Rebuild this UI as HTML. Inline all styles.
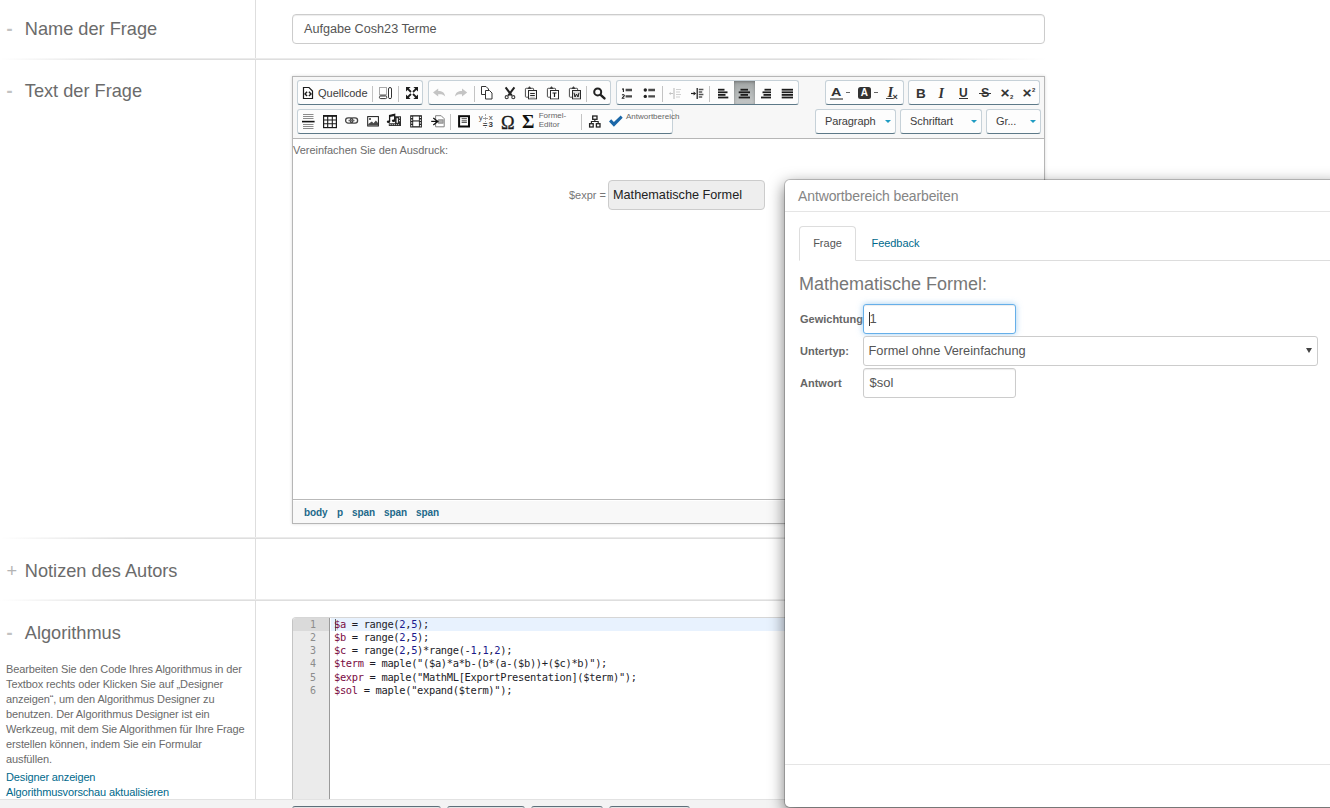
<!DOCTYPE html>
<html lang="de">
<head>
<meta charset="utf-8">
<title>Frage bearbeiten</title>
<style>
*{box-sizing:border-box;}
html,body{margin:0;padding:0;}
body{width:1330px;height:808px;overflow:hidden;background:#fff;font-family:"Liberation Sans",Arial,sans-serif;color:#666;position:relative;font-size:12px;}
.abs{position:absolute;}
.vline{position:absolute;left:255px;top:0;width:1px;height:799px;background:#dedede;}
.hline{position:absolute;left:0;width:1046px;height:2px;background:linear-gradient(to right,rgba(255,255,255,1) 0,rgba(255,255,255,0) 130px,rgba(255,255,255,0) 880px,rgba(255,255,255,1) 1046px),linear-gradient(#ebebeb 50%,#dedede 50%);}
.sec{position:absolute;left:6.500px;font-size:18.200px;color:#6b6b6b;white-space:nowrap;}
.sec .tg{display:inline-block;width:18.300px;color:#b4b4b4;}
.inp{position:absolute;left:292px;top:14px;width:753px;height:30px;border:1px solid #ccc;border-radius:4px;background:#fff;box-shadow:inset 0 1px 1px rgba(0,0,0,.075);font-size:12.650px;color:#555;line-height:28px;padding-left:11px;}
/* editor */
.cke{position:absolute;left:292px;top:76px;width:753px;height:448px;border:1px solid #b6b6b6;background:#fff;box-shadow:0 0 3px rgba(0,0,0,.15);}
.cke-top{position:absolute;left:0;top:0;width:751px;height:62px;background:#f7f7f7;border-bottom:1px solid #b6b6b6;}
.cke-bot{position:absolute;left:0;bottom:0;width:751px;height:24px;background:#f8f8f8;border-top:1px solid #b9b9b9;box-shadow:inset 0 1px 0 #fff;}
.cke-bot span{position:absolute;top:6.500px;letter-spacing:-0.080px;font-size:10px;font-weight:bold;color:#21688a;}
.grp{position:absolute;border:1px solid #c6d1d8;border-bottom:1px solid #5d7988;border-radius:3px;background:#fdfdfd;}
.combo{position:absolute;height:25px;border:1px solid #c6d1d8;border-bottom:1px solid #5d7988;border-radius:3px;background:#fdfdfd;font-size:11px;color:#3c3c3c;line-height:23px;padding-left:9px;letter-spacing:-0.100px;}
.combo i{position:absolute;right:4.500px;top:10px;border:3.5px solid transparent;border-top:3.5px solid #1f9bc2;border-bottom:0;width:0;height:0;}
.sep{position:absolute;width:1px;height:16px;background:#c3c3c3;}
.ico{position:absolute;}
/* ace */
.ace{position:absolute;left:292px;top:617px;width:500px;height:182px;background:#fff;border-top:1px solid #d6d6d6;border-left:1px solid #c4c4c4;border-radius:4px 0 0 0;overflow:hidden;}
.gut{position:absolute;left:0;top:0;width:37px;height:182px;background:#ebebeb;border-right:1px solid #9a9a9a;}
.gut b{position:absolute;left:0;top:0;width:36px;height:13px;background:#dadada;}
.gut span{position:absolute;right:13px;font:10px/13px "DejaVu Sans Mono","Liberation Mono",monospace;color:#8c8c8c;font-weight:normal;}
.code{position:absolute;left:41px;font:10.400px/13px "DejaVu Sans Mono","Liberation Mono",monospace;color:#1c1c28;white-space:pre;letter-spacing:-0.320px;}
.code .v{color:#7a0a42;}
.code .n{color:#1a1a8c;}
.actl{position:absolute;left:38px;top:0;width:462px;height:13px;background:#e8f2fe;}
/* help */
.help{position:absolute;left:6px;top:662.400px;width:252px;font-size:11px;line-height:14.930px;color:#6a6a6a;letter-spacing:-0.120px;white-space:nowrap;}
.lnk{position:absolute;left:6px;font-size:11px;color:#00698c;white-space:nowrap;letter-spacing:-0.140px;}
/* bottom bar */
.bbar{position:absolute;left:0;top:799px;width:1330px;height:9px;background:#f3f3f3;border-top:1px solid #e2e2e2;}
.bbtn{position:absolute;top:806px;height:8px;border:1px solid #8a9aa3;border-top:1.500px solid #5d6f7a;border-radius:3px;background:#e4e4e4;}
/* modal */
.modal{position:absolute;left:784px;top:179px;width:560px;height:629px;background:#fff;background-clip:padding-box;border:1px solid rgba(0,0,0,.2);border-radius:6px;box-shadow:0 5px 15px rgba(0,0,0,.5);}
.mh{position:absolute;left:0;top:0;width:100%;height:32px;border-bottom:1px solid #e5e5e5;font-size:14px;color:#858585;padding:7.500px 0 0 13px;letter-spacing:-0.12px;white-space:nowrap;}
.mf{position:absolute;left:0;top:584px;width:100%;height:1px;background:#e5e5e5;}
.tabs{position:absolute;left:14px;top:46px;width:546px;height:35px;border-bottom:1px solid #ddd;}
.tab1{position:absolute;left:0;top:0;width:57px;height:35px;border:1px solid #ddd;border-bottom:1px solid #fff;border-radius:4px 4px 0 0;background:#fff;font-size:11px;color:#555;text-align:center;line-height:33px;}
.tab2{position:absolute;left:72.500px;top:0;height:34px;font-size:11px;letter-spacing:-0.05px;color:#00698c;line-height:35px;}
.mt{position:absolute;left:14px;top:94px;font-size:18px;color:#777;white-space:nowrap;}
.lab{position:absolute;left:15px;font-size:11px;font-weight:bold;color:#666;white-space:nowrap;}
.fi{position:absolute;left:78px;width:153px;height:30px;border:1px solid #ccc;border-radius:3px;background:#fff;font-size:13px;color:#555;line-height:28px;padding-left:5.500px;box-shadow:inset 0 1px 1px rgba(0,0,0,.075);}
.fi.foc{border-color:#66afe9;box-shadow:inset 0 1px 1px rgba(0,0,0,.075),0 0 6px rgba(102,175,233,.6);}
.sel{position:absolute;left:78px;top:156px;width:455px;height:30px;border:1px solid #ccc;border-radius:3px;background:#fff;font-size:12.800px;color:#555;line-height:28px;padding-left:4.500px;}
</style>
</head>
<body>
<div class="vline"></div>
<div class="hline" style="top:58px"></div>
<div class="hline" style="top:537px"></div>
<div class="hline" style="top:599px"></div>

<div class="sec" style="top:19.300px"><span class="tg" style="font-weight:bold;color:#c2c2c2">-</span>Name der Frage</div>
<div class="sec" style="top:81.300px"><span class="tg" style="font-weight:bold;color:#c2c2c2">-</span>Text der Frage</div>
<div class="sec" style="top:561.300px"><span class="tg">+</span>Notizen des Autors</div>
<div class="sec" style="top:623.300px"><span class="tg" style="font-weight:bold;color:#c2c2c2">-</span>Algorithmus</div>

<div class="inp">Aufgabe Cosh23 Terme</div>

<div class="cke">
  <div class="cke-top" id="tb"></div>
  <div class="abs" style="left:0;top:67px;font-size:11px;color:#6c6c6c;white-space:nowrap;letter-spacing:-0.03px">Vereinfachen Sie den Ausdruck:</div>
  <div class="abs" style="left:276px;top:112px;font-size:11px;color:#777;white-space:nowrap">$expr =</div>
  <div class="abs" style="left:315px;top:103px;width:157px;height:30px;border:1px solid #ccc;border-radius:4px;background:#eee;font-size:12.700px;color:#222;line-height:28px;padding-left:4px;white-space:nowrap">Mathematische Formel</div>
  <div class="cke-bot">
    <span style="left:11px">body</span><span style="left:44px">p</span><span style="left:59px">span</span><span style="left:91px">span</span><span style="left:123px">span</span>
  </div>
</div>

<div id="tbar" class="abs" style="left:0;top:0"><!--TB--><div class="grp" style="left:297px;top:80px;width:126px;height:25px"></div>
<div class="grp" style="left:428px;top:80px;width:183px;height:25px"></div>
<div class="grp" style="left:616px;top:80px;width:183px;height:25px"></div>
<div class="grp" style="left:825px;top:80px;width:79px;height:25px"></div>
<div class="grp" style="left:908px;top:80px;width:132px;height:25px"></div>
<div class="grp" style="left:297px;top:109px;width:376px;height:25px"></div>
<div class="sep" style="left:372px;top:86px"></div>
<div class="sep" style="left:398px;top:86px"></div>
<div class="sep" style="left:474px;top:86px"></div>
<div class="sep" style="left:586px;top:86px"></div>
<div class="sep" style="left:662px;top:86px"></div>
<div class="sep" style="left:709px;top:86px"></div>
<div class="sep" style="left:450px;top:114px"></div>
<div class="sep" style="left:581px;top:114px"></div>
<svg class="ico" style="left:300px;top:85px" width="16" height="16" viewBox="0 0 16 16"><path d="M3.500 2.500h5.500l3.500 3.500v7.500h-9z" fill="#fff" stroke="#1c1c1c" stroke-width="1.200"/><path d="M7.100 6.800L5 8.900 7.100 11M8.900 6.800L11 8.900 8.900 11" fill="none" stroke="#1c1c1c" stroke-width="1.400"/></svg>
<div class="abs" style="left:318px;top:87px;white-space:nowrap;font-size:11px;line-height:13px;color:#3c3c3c;">Quellcode</div>
<svg class="ico" style="left:377px;top:85px" width="16" height="16" viewBox="0 0 16 16"><rect x="2.500" y="2.500" width="7" height="7" fill="none" stroke="#555" stroke-width="1" stroke-dasharray="1 1"/><path d="M2.500 10.500h7" stroke="#aaa" stroke-width="1"/><rect x="2.400" y="11" width="7.400" height="2.600" rx="1.300" fill="#fff" stroke="#333" stroke-width="1"/><rect x="11.500" y="2.500" width="3" height="11.200" rx="1.500" fill="#fff" stroke="#333" stroke-width="1"/></svg>
<svg class="ico" style="left:404px;top:85px" width="16" height="16" viewBox="0 0 16 16"><g fill="#1c1c1c" stroke="none"><path d="M2 2h4.600L2 6.600z"/><path d="M14 2v4.600L9.400 2z"/><path d="M2 14V9.400L6.600 14z"/><path d="M14 14H9.400L14 9.400z"/></g><path d="M3.600 3.600L7 7M12.400 3.600L9 7M3.600 12.400L7 9M12.400 12.400L9 9" stroke="#1c1c1c" stroke-width="1.800" fill="none"/></svg>
<svg class="ico" style="left:431px;top:85px" width="16" height="16" viewBox="0 0 16 16"><path d="M2 7.500L7.200 3.600v2.400c4 0 6.500 1.500 7 5.600C12.500 9.400 10.500 9 7.200 9.200V11.600z" fill="#c4c4c4"/></svg>
<svg class="ico" style="left:453px;top:85px" width="16" height="16" viewBox="0 0 16 16"><path d="M14.200 7.500L9 3.600v2.400c-4 0-6.500 1.500-7 5.600C3.700 9.400 5.700 9 9 9.200V11.600z" fill="#c4c4c4"/></svg>
<svg class="ico" style="left:479px;top:85px" width="16" height="16" viewBox="0 0 16 16"><path d="M2.500 1.500h4.500l2.500 2.500v5.500h-7z" fill="#fff" stroke="#333"/><path d="M6.500 5.500h4l2.500 2.500v6h-6.500z" fill="#fff" stroke="#333"/></svg>
<svg class="ico" style="left:502px;top:85px" width="16" height="16" viewBox="0 0 16 16"><path d="M3.600 2.300l6.200 8.400M12.400 2.300L6.200 10.700" stroke="#222" stroke-width="2" fill="none"/><circle cx="4.700" cy="12.200" r="1.500" fill="#fff" stroke="#444" stroke-width="1.200"/><circle cx="11.300" cy="12.200" r="1.500" fill="#fff" stroke="#444" stroke-width="1.200"/></svg>
<svg class="ico" style="left:523px;top:85px" width="16" height="16" viewBox="0 0 16 16"><path d="M4.500 3.300H3.200q-0.800 0-0.800 0.800V11.400q0 0.800 0.800 0.800H5.500" fill="none" stroke="#4a4a4a" stroke-width="1"/><path d="M8.500 3.300H9.800q0.800 0 0.800 0.800V5.500" fill="none" stroke="#4a4a4a" stroke-width="1"/><path d="M4.300 3.900c0-1 0.700-1.300 1.300-1.300 0-1.500 1.800-1.500 1.800 0 0.600 0 1.300 0.300 1.300 1.300z" fill="#3a3a3a"/><rect x="5.500" y="5.500" width="8" height="8.300" fill="#e6e6e6" stroke="#2a2a2a" stroke-width="1"/><rect x="6" y="6" width="7" height="7.300" fill="#f4f4f4"/><path d="M7.200 8.500h4.600M7.200 10.500h4.600" stroke="#2a2a2a" stroke-width="1"/><path d="M7.200 12.300h4.600" stroke="#999" stroke-width="0.600"/></svg>
<svg class="ico" style="left:545px;top:85px" width="16" height="16" viewBox="0 0 16 16"><path d="M4.500 3.300H3.200q-0.800 0-0.800 0.800V11.400q0 0.800 0.800 0.800H5.500" fill="none" stroke="#4a4a4a" stroke-width="1"/><path d="M8.500 3.300H9.800q0.800 0 0.800 0.800V5.500" fill="none" stroke="#4a4a4a" stroke-width="1"/><path d="M4.300 3.900c0-1 0.700-1.300 1.300-1.300 0-1.500 1.800-1.500 1.800 0 0.600 0 1.300 0.300 1.300 1.300z" fill="#3a3a3a"/><rect x="5.500" y="5.500" width="8" height="8.300" fill="#e6e6e6" stroke="#2a2a2a" stroke-width="1"/><rect x="6" y="6" width="7" height="7.300" fill="#fff"/><path d="M7.500 8h4M9.500 8v4" stroke="#1a1a1a" stroke-width="1.200" fill="none"/></svg>
<svg class="ico" style="left:567px;top:85px" width="16" height="16" viewBox="0 0 16 16"><path d="M4.500 3.300H3.200q-0.800 0-0.800 0.800V11.400q0 0.800 0.800 0.800H5.500" fill="none" stroke="#4a4a4a" stroke-width="1"/><path d="M8.500 3.300H9.800q0.800 0 0.800 0.800V5.500" fill="none" stroke="#4a4a4a" stroke-width="1"/><path d="M4.300 3.900c0-1 0.700-1.300 1.300-1.300 0-1.500 1.800-1.500 1.800 0 0.600 0 1.300 0.300 1.300 1.300z" fill="#3a3a3a"/><rect x="5.500" y="5.500" width="8" height="8.300" fill="#e6e6e6" stroke="#2a2a2a" stroke-width="1"/><rect x="6" y="6" width="7" height="7.300" fill="#e0e0e0"/><path d="M7 7.800l1 4.200 1.500-3 1.500 3 1-4.200" stroke="#1a1a1a" stroke-width="1" fill="none" stroke-linejoin="round"/></svg>
<svg class="ico" style="left:591px;top:85px" width="16" height="16" viewBox="0 0 16 16"><circle cx="6.700" cy="6.900" r="3.500" fill="none" stroke="#222" stroke-width="2"/><path d="M9.600 9.800l3.900 3.600" stroke="#222" stroke-width="2.400" stroke-linecap="round"/></svg>
<svg class="ico" style="left:620px;top:85px" width="16" height="16" viewBox="0 0 16 16"><path d="M5.600 5h6.400M5.600 11.400h6.400" stroke="#4a4a4a" stroke-width="2.400"/><path d="M3.400 3.500v3.500M2.300 4.500l1.100-1" stroke="#222" stroke-width="1.100" fill="none"/><path d="M2.200 10.300c0.500-1 2.300-0.800 2.100 0.400-0.200 0.900-2 1.500-2.100 2.500h2.300" stroke="#222" stroke-width="1.100" fill="none"/></svg>
<svg class="ico" style="left:642px;top:85px" width="16" height="16" viewBox="0 0 16 16"><path d="M6.300 5h6.700M6.300 11.400h6.700" stroke="#4a4a4a" stroke-width="2.400"/><circle cx="3.300" cy="5" r="1.700" fill="#222"/><circle cx="3.300" cy="11.400" r="1.700" fill="#222"/></svg>
<svg class="ico" style="left:667px;top:85px" width="16" height="16" viewBox="0 0 16 16"><g stroke="#d0d0d0" fill="none"><path d="M7 3v11" stroke-width="1.200" stroke="#c2c2c2"/><path d="M9 4.500h5M9 7h4M9 9.500h5M9 12h4" stroke-width="1.200"/><path d="M3 8.500h3" stroke-width="1" stroke="#c2c2c2"/></g><path d="M1.800 8.500l2-1.600v3.200z" fill="#c2c2c2"/></svg>
<svg class="ico" style="left:689px;top:85px" width="16" height="16" viewBox="0 0 16 16"><g stroke="#555" fill="none"><path d="M8.200 3v11" stroke-width="1.300" stroke="#222"/><path d="M9.800 4.500h4.600M9.800 7h3.400M9.800 9.500h4.600M9.800 12h3.400" stroke-width="1.300"/><path d="M2 8.500h3.500" stroke-width="1.200" stroke="#222"/></g><path d="M7.200 8.500l-2.600-2v4z" fill="#222"/></svg>
<svg class="ico" style="left:716px;top:85px" width="16" height="16" viewBox="0 0 16 16"><path d="M2 4.7H8.5" stroke="#1d1d1d" stroke-width="1.800"/><path d="M2 7.3H11.5" stroke="#1d1d1d" stroke-width="1.800"/><path d="M2 9.9H9.5" stroke="#1d1d1d" stroke-width="1.800"/><path d="M2 12.5H12.3" stroke="#1d1d1d" stroke-width="1.800"/></svg>
<div class="abs" style="left:734px;top:81px;width:21px;height:23px;background:linear-gradient(#9fa3a3,#b2b6b6 45%,#c3c6c6);box-shadow:inset 0 1px 3px rgba(0,0,0,.3)"></div>
<svg class="ico" style="left:736px;top:85px" width="16" height="16" viewBox="0 0 16 16"><path d="M4.5 4.7H12" stroke="#1d1d1d" stroke-width="1.800"/><path d="M2.7 7.3H14" stroke="#1d1d1d" stroke-width="1.800"/><path d="M4.5 9.9H12" stroke="#1d1d1d" stroke-width="1.800"/><path d="M2.7 12.5H14" stroke="#1d1d1d" stroke-width="1.800"/></svg>
<svg class="ico" style="left:758px;top:85px" width="16" height="16" viewBox="0 0 16 16"><path d="M6.5 4.7H13" stroke="#1d1d1d" stroke-width="1.800"/><path d="M4.5 7.3H13" stroke="#1d1d1d" stroke-width="1.800"/><path d="M5.5 9.9H13" stroke="#1d1d1d" stroke-width="1.800"/><path d="M3 12.5H13" stroke="#1d1d1d" stroke-width="1.800"/></svg>
<svg class="ico" style="left:779px;top:85px" width="16" height="16" viewBox="0 0 16 16"><path d="M2.7 4.7H14" stroke="#1d1d1d" stroke-width="1.800"/><path d="M2.7 7.3H14" stroke="#1d1d1d" stroke-width="1.800"/><path d="M2.7 9.9H14" stroke="#1d1d1d" stroke-width="1.800"/><path d="M2.7 12.5H14" stroke="#1d1d1d" stroke-width="1.800"/></svg>
<div class="abs" style="left:830.5px;top:86px;white-space:nowrap;font-size:11.500px;font-weight:bold;color:#333;line-height:13px;transform:scaleX(1.250);transform-origin:0 0">A</div>
<div class="abs" style="left:830px;top:98px;width:13px;height:2px;background:#8a8a8a"></div>
<div class="abs" style="left:846px;top:92px;width:4px;height:1px;background:#666"></div>
<div class="abs" style="left:858px;top:87px;width:13px;height:12px;background:#333;border-radius:2.500px"></div>
<div class="abs" style="left:860.7px;top:87px;white-space:nowrap;font-size:10px;font-weight:bold;color:#fff;line-height:12px">A</div>
<div class="abs" style="left:874px;top:92px;width:4px;height:1px;background:#666"></div>
<div class="abs" style="left:887.5px;top:84px;white-space:nowrap;font-size:14.500px;font-weight:bold;font-style:italic;color:#333;line-height:17px;font-family:'Liberation Serif',serif">I</div>
<div class="abs" style="left:886px;top:98px;width:7px;height:1px;background:#444"></div>
<div class="abs" style="left:892.5px;top:92px;white-space:nowrap;font-size:9px;font-weight:bold;color:#333;line-height:10px">×</div>
<div class="abs" style="left:916px;top:85.5px;white-space:nowrap;font-weight:bold;color:#333;font-size:13.500px;line-height:15px">B</div>
<div class="abs" style="left:938.5px;top:86px;white-space:nowrap;font-weight:bold;color:#333;font-size:14px;line-height:16px;font-style:italic;font-family:'Liberation Serif',serif">I</div>
<div class="abs" style="left:959px;top:86px;white-space:nowrap;font-weight:bold;color:#333;font-size:12px;line-height:15px">U</div>
<div class="abs" style="left:959px;top:98px;width:9px;height:1px;background:#333"></div>
<div class="abs" style="left:981px;top:86px;white-space:nowrap;font-weight:bold;color:#333;font-size:12.500px;line-height:15px">S</div>
<div class="abs" style="left:979px;top:92.5px;width:12px;height:1.200px;background:#333"></div>
<div class="abs" style="left:1000.5px;top:84.5px;white-space:nowrap;font-weight:bold;color:#333;font-size:15.500px;line-height:16px">×</div>
<div class="abs" style="left:1010px;top:94px;white-space:nowrap;font-weight:bold;color:#333;font-size:6px;line-height:6px">2</div>
<div class="abs" style="left:1022.5px;top:84.7px;white-space:nowrap;font-weight:bold;color:#333;font-size:15.500px;line-height:16px">×</div>
<div class="abs" style="left:1032px;top:87px;white-space:nowrap;font-weight:bold;color:#333;font-size:6px;line-height:6px">2</div>
<svg class="ico" style="left:300px;top:113px" width="16" height="17" viewBox="0 0 16 17"><path d="M3 1.500h10.500M3 3.500h10.500M3 5.500h10.500M3 11.500h10.500M3 13.500h10.500M3 15.500h10.500" stroke="#8c8c8c" stroke-width="1"/><path d="M2 8.600h12.600" stroke="#111" stroke-width="1.600"/></svg>
<svg class="ico" style="left:322px;top:113px" width="16" height="17" viewBox="0 0 16 17"><rect x="1.600" y="2.600" width="12.800" height="12" fill="#fff" stroke="#1a1a1a" stroke-width="1.200"/><path d="M1 2.900h14" stroke="#1a1a1a" stroke-width="1.800"/><path d="M1.500 7h13M1.500 10.800h13M5.700 3v11.500M10.300 3v11.500" stroke="#1a1a1a" stroke-width="1.100"/></svg>
<svg class="ico" style="left:344px;top:113px" width="16" height="17" viewBox="0 0 16 17"><rect x="1.600" y="4.900" width="7.200" height="5.200" rx="2.600" fill="none" stroke="#444" stroke-width="1.300"/><rect x="6.400" y="4.900" width="7.200" height="5.200" rx="2.600" fill="none" stroke="#444" stroke-width="1.300"/><path d="M4.500 7.500h6" stroke="#666" stroke-width="1.400"/></svg>
<svg class="ico" style="left:365px;top:113px" width="16" height="17" viewBox="0 0 16 17"><rect x="2.700" y="3.600" width="10.700" height="9.400" fill="#fff" stroke="#1a1a1a" stroke-width="1"/><path d="M3.200 12.500V11l1.800-1.200 1.900-1.400 1.600 1.900 2.400-2.700 2.100 2.400v2.500z" fill="#4a4a4a"/><circle cx="5" cy="6" r="1" fill="#333"/></svg>
<svg class="ico" style="left:386px;top:113px" width="16" height="17" viewBox="0 0 16 17"><path d="M9 3.300h6v9.600H2.800v-2.700H9z" fill="#2e2e2e"/><rect x="10.600" y="5.200" width="1.300" height="4.600" fill="#fff"/><rect x="13" y="4.300" width="1" height="1.300" fill="#ddd"/><rect x="13" y="7" width="1" height="1.300" fill="#ddd"/><path d="M3.600 11.600h9.500" stroke="#bbb" stroke-width="1" stroke-dasharray="1.200 0.900"/><path d="M3.600 8.600V2.600L8.700 1.400v6.300" fill="none" stroke="#1a1a1a" stroke-width="1.300"/><path d="M3.600 3.300L8.700 2.100" stroke="#1a1a1a" stroke-width="1.600"/><ellipse cx="2.500" cy="8.800" rx="1.700" ry="1.300" fill="#1a1a1a"/><ellipse cx="7.600" cy="7.800" rx="1.700" ry="1.300" fill="#1a1a1a"/></svg>
<svg class="ico" style="left:408px;top:113px" width="16" height="17" viewBox="0 0 16 17"><rect x="2.200" y="2.200" width="11.700" height="12.300" fill="#242424"/><rect x="5.200" y="3.500" width="5.700" height="3.900" fill="#fff"/><rect x="5.200" y="8.500" width="5.700" height="4.700" fill="#fff"/><rect x="3.1" y="3.7" width="1.200" height="1.300" fill="#fff"/><rect x="3.1" y="6.5" width="1.200" height="1.300" fill="#fff"/><rect x="3.1" y="9.3" width="1.200" height="1.300" fill="#fff"/><rect x="3.1" y="12.1" width="1.200" height="1.300" fill="#fff"/><rect x="11.8" y="3.7" width="1.200" height="1.300" fill="#fff"/><rect x="11.8" y="6.5" width="1.200" height="1.300" fill="#fff"/><rect x="11.8" y="9.3" width="1.200" height="1.300" fill="#fff"/><rect x="11.8" y="12.1" width="1.200" height="1.300" fill="#fff"/></svg>
<svg class="ico" style="left:430px;top:113px" width="16" height="17" viewBox="0 0 16 17"><path d="M5.600 2.700h5.600l3 3v8.100H5.600z" fill="#fff" stroke="#808080" stroke-width="1"/><rect x="8.300" y="6.800" width="4.800" height="3.400" fill="#b0b0b0" stroke="#808080" stroke-width="0.800"/><path d="M1.200 8.400h6.600" stroke="#111" stroke-width="1.200"/><path d="M3.300 4.900l4.600 3.500-4.600 3.500" fill="none" stroke="#111" stroke-width="1.200"/></svg>
<svg class="ico" style="left:456px;top:113px" width="16" height="17" viewBox="0 0 16 17"><rect x="3.100" y="3.200" width="9.900" height="10.300" fill="#fff" stroke="#0a0a0a" stroke-width="2"/><path d="M5.600 5.500h5.300M5.600 7.300h5.300" stroke="#666" stroke-width="1"/><path d="M5.600 9.200h5.300" stroke="#111" stroke-width="1"/></svg>
<div class="abs" style="left:485px;top:114px;width:0;height:14px;border-left:1px dotted #aaa"></div>
<div class="abs" style="left:483px;top:118px;width:5px;height:1px;background:#999"></div>
<div class="abs" style="left:478.8px;top:113.5px;white-space:nowrap;font-size:8px;line-height:8px;color:#484848">y</div>
<div class="abs" style="left:488.8px;top:113.5px;white-space:nowrap;font-size:8px;line-height:8px;color:#484848">x</div>
<div class="abs" style="left:482.8px;top:120.8px;white-space:nowrap;font-size:8px;line-height:8px;color:#3a3a3a;letter-spacing:1px;font-weight:bold">=3</div>
<div class="abs" style="left:501px;top:111.6px;white-space:nowrap;font-size:18.300px;line-height:22px;color:#1a1a1a;font-family:'Liberation Serif',serif;-webkit-text-stroke:0.350px #1a1a1a">Ω</div>
<div class="abs" style="left:522px;top:111.3px;white-space:nowrap;font-size:19px;line-height:21px;color:#111;font-weight:bold;font-family:'Liberation Serif',serif">Σ</div>
<div class="abs" style="left:538.7px;top:112.3px;white-space:nowrap;font-size:8px;line-height:8.800px;color:#666">Formel-<br>Editor</div>
<svg class="ico" style="left:587px;top:113px" width="16" height="17" viewBox="0 0 16 17"><g fill="#fff" stroke="#222" stroke-width="1.300"><rect x="5.700" y="3" width="4.300" height="3.300"/><rect x="2.600" y="10.700" width="3.600" height="3.300"/><rect x="9.400" y="10.700" width="3.600" height="3.300"/></g><path d="M7.850 6.500v2.200M4.400 10.500v-2h6.800v2" fill="none" stroke="#222" stroke-width="1.100"/></svg>
<svg class="ico" style="left:608px;top:113px" width="16" height="17" viewBox="0 0 16 17"><path d="M1 8.400l2.200-2.200 2.700 2.700L12.700 2.600l2 2.100L5.900 13.700z" fill="#1b67a8"/></svg>
<div class="abs" style="left:626px;top:111.5px;white-space:nowrap;font-size:8px;line-height:9px;color:#666">Antwortbereich</div>
<div class="combo" style="left:815px;top:109px;width:81px">Paragraph<i></i></div>
<div class="combo" style="left:900px;top:109px;width:82px">Schriftart<i></i></div>
<div class="combo" style="left:986px;top:109px;width:55px">Gr...<i></i></div><!--/TB--></div>
<div class="help">Bearbeiten Sie den Code Ihres Algorithmus in der<br>Textbox rechts oder Klicken Sie auf „Designer<br>anzeigen“, um den Algorithmus Designer zu<br>benutzen. Der Algorithmus Designer ist ein<br>Werkzeug, mit dem Sie Algorithmen für Ihre Frage<br>erstellen können, indem Sie ein Formular<br>ausfüllen.</div>
<div class="lnk" style="top:771px">Designer anzeigen</div>
<div class="lnk" style="top:786px">Algorithmusvorschau aktualisieren</div>

<div class="ace">
  <div class="actl"></div><div class="abs" style="left:42px;top:1px;width:1px;height:12px;background:#666"></div>
  <div class="gut"><b></b>
    <span style="top:0">1</span><span style="top:13.15px">2</span><span style="top:26.3px">3</span><span style="top:39.45px">4</span><span style="top:52.6px">5</span><span style="top:65.75px">6</span>
  </div>
  <div class="code" style="top:0"><span class="v">$a</span> = range(<span class="n">2</span>,<span class="n">5</span>);</div>
  <div class="code" style="top:13.15px"><span class="v">$b</span> = range(<span class="n">2</span>,<span class="n">5</span>);</div>
  <div class="code" style="top:26.3px"><span class="v">$c</span> = range(<span class="n">2</span>,<span class="n">5</span>)*range(-<span class="n">1</span>,<span class="n">1</span>,<span class="n">2</span>);</div>
  <div class="code" style="top:39.45px"><span class="v">$term</span> = maple("($a)*a*b-(b*(a-($b))+($c)*b)");</div>
  <div class="code" style="top:52.6px"><span class="v">$expr</span> = maple("MathML[ExportPresentation]($term)");</div>
  <div class="code" style="top:65.75px"><span class="v">$sol</span> = maple("expand($term)");</div>
</div>

<div class="bbar"></div>
<div class="bbtn" style="left:292px;width:149px"></div>
<div class="bbtn" style="left:447px;width:78px"></div>
<div class="bbtn" style="left:531px;width:72px"></div>
<div class="bbtn" style="left:609px;width:81px"></div>

<div class="modal">
  <div class="mh">Antwortbereich bearbeiten</div>
  <div class="tabs"><div class="tab1">Frage</div><div class="tab2">Feedback</div></div>
  <div class="mt">Mathematische Formel:</div>
  <div class="lab" style="top:133px">Gewichtung</div>
  <div class="fi foc" style="top:124px"><span style="position:absolute;left:5px;top:7px;width:1px;height:14px;background:#333"></span>1</div>
  <div class="lab" style="top:165px">Untertyp:</div>
  <div class="sel">Formel ohne Vereinfachung<span style="position:absolute;left:442px;top:11px;width:0;height:0;border-left:3px solid transparent;border-right:3px solid transparent;border-top:5.500px solid #444"></span></div>
  <div class="lab" style="top:197px">Antwort</div>
  <div class="fi" style="top:188px">$sol</div>
  <div class="mf"></div>
</div>
</body>
</html>
